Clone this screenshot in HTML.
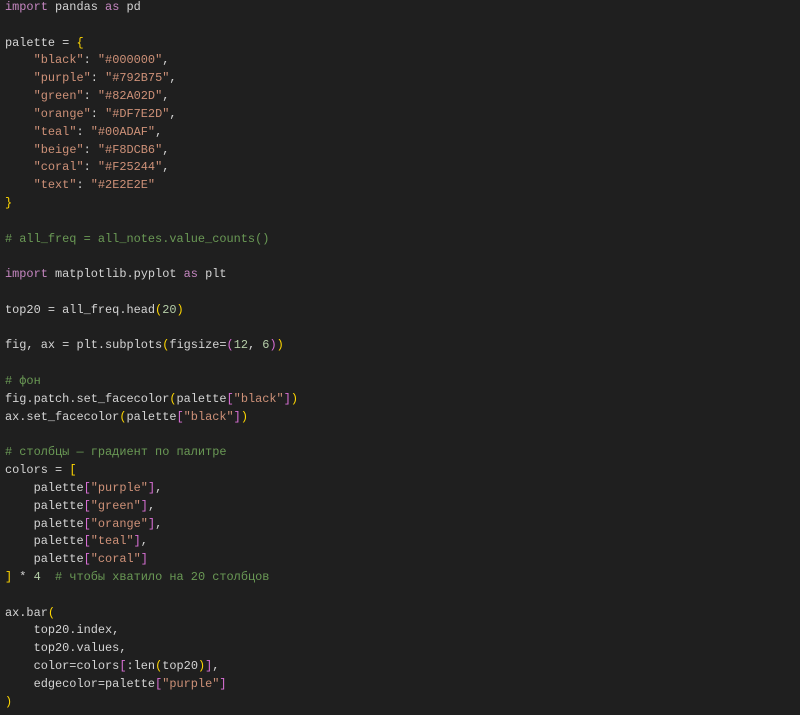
<!DOCTYPE html><html><head><meta charset="utf-8"><style>
body{margin:0;background:#1f1f1f;width:800px;height:715px;overflow:hidden}
pre{margin:0;position:absolute;left:5px;top:-1px;font-family:"Liberation Mono","DejaVu Sans Mono",monospace;font-size:11.92px;line-height:17.82px;color:#d4d4d4}
.k{color:#c586c0}.s{color:#ce9178}.c{color:#6a9955}.y{color:#ffd700}.p{color:#da70d6}.n{color:#b5cea8}
</style></head><body><pre><span class="k">import</span> pandas <span class="k">as</span> pd

palette = <span class="y">{</span>
    <span class="s">"black"</span>: <span class="s">"#000000"</span>,
    <span class="s">"purple"</span>: <span class="s">"#792B75"</span>,
    <span class="s">"green"</span>: <span class="s">"#82A02D"</span>,
    <span class="s">"orange"</span>: <span class="s">"#DF7E2D"</span>,
    <span class="s">"teal"</span>: <span class="s">"#00ADAF"</span>,
    <span class="s">"beige"</span>: <span class="s">"#F8DCB6"</span>,
    <span class="s">"coral"</span>: <span class="s">"#F25244"</span>,
    <span class="s">"text"</span>: <span class="s">"#2E2E2E"</span>
<span class="y">}</span>

<span class="c"># all_freq = all_notes.value_counts()</span>

<span class="k">import</span> matplotlib.pyplot <span class="k">as</span> plt

top20 = all_freq.head<span class="y">(</span><span class="n">20</span><span class="y">)</span>

fig, ax = plt.subplots<span class="y">(</span>figsize=<span class="p">(</span><span class="n">12</span>, <span class="n">6</span><span class="p">)</span><span class="y">)</span>

<span class="c"># фон</span>
fig.patch.set_facecolor<span class="y">(</span>palette<span class="p">[</span><span class="s">"black"</span><span class="p">]</span><span class="y">)</span>
ax.set_facecolor<span class="y">(</span>palette<span class="p">[</span><span class="s">"black"</span><span class="p">]</span><span class="y">)</span>

<span class="c"># столбцы — градиент по палитре</span>
colors = <span class="y">[</span>
    palette<span class="p">[</span><span class="s">"purple"</span><span class="p">]</span>,
    palette<span class="p">[</span><span class="s">"green"</span><span class="p">]</span>,
    palette<span class="p">[</span><span class="s">"orange"</span><span class="p">]</span>,
    palette<span class="p">[</span><span class="s">"teal"</span><span class="p">]</span>,
    palette<span class="p">[</span><span class="s">"coral"</span><span class="p">]</span>
<span class="y">]</span> * <span class="n">4</span>  <span class="c"># чтобы хватило на 20 столбцов</span>

ax.bar<span class="y">(</span>
    top20.index,
    top20.values,
    color=colors<span class="p">[</span>:len<span class="y">(</span>top20<span class="y">)</span><span class="p">]</span>,
    edgecolor=palette<span class="p">[</span><span class="s">"purple"</span><span class="p">]</span>
<span class="y">)</span></pre></body></html>
